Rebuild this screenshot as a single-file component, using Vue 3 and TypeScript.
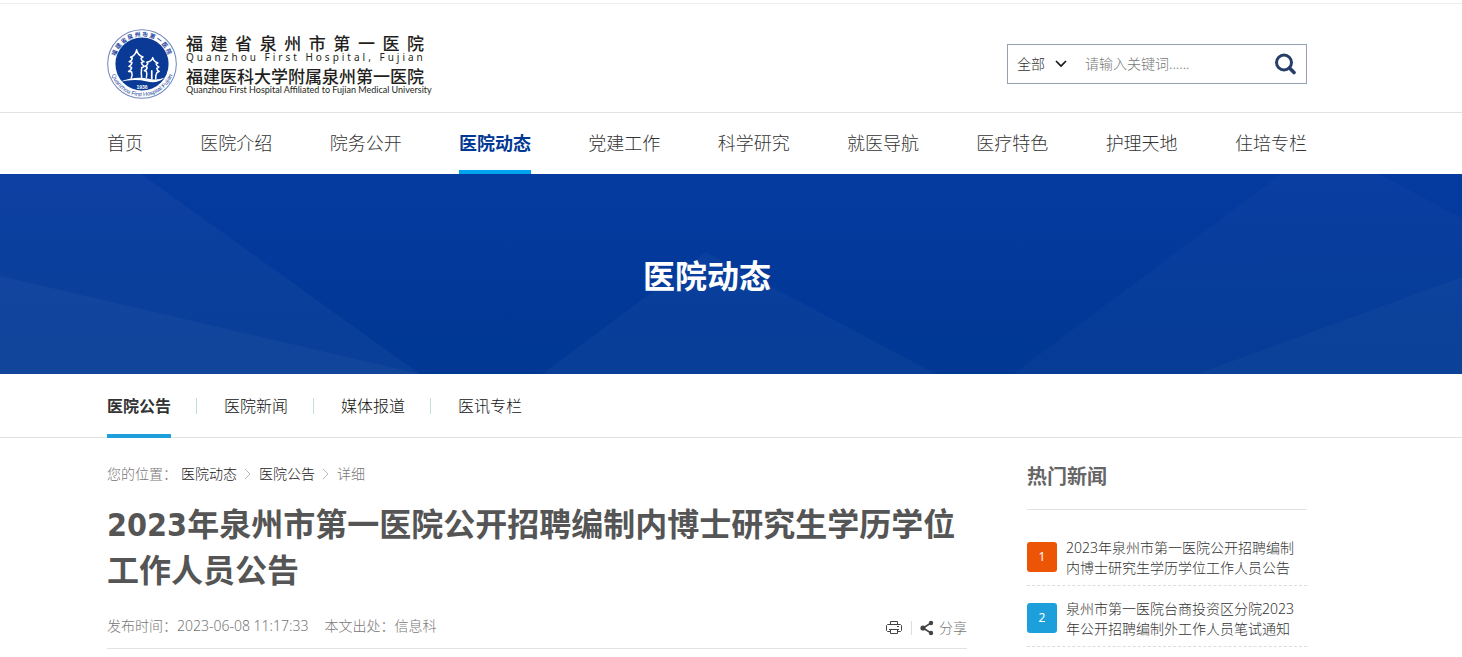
<script setup lang="ts">
import { ref } from 'vue'

interface HotNews {
  id: number
  title: string
}

const navItems: string[] = [
  '首页', '医院介绍', '院务公开', '医院动态', '党建工作',
  '科学研究', '就医导航', '医疗特色', '护理天地', '住培专栏',
]
const activeNav = ref('医院动态')

const subItems: string[] = ['医院公告', '医院新闻', '媒体报道', '医讯专栏']
const activeSub = ref('医院公告')

const hotNews: HotNews[] = [
  { id: 1, title: '2023年泉州市第一医院公开招聘编制内博士研究生学历学位工作人员公告' },
  { id: 2, title: '泉州市第一医院台商投资区分院2023年公开招聘编制外工作人员笔试通知' },
]

const scope = ref('全部')
const keyword = ref('')
</script>

<template>
  <div class="page">
    <header class="header">
      <div class="wrap header-row">
        <a class="logo" href="#">
          <svg class="seal" viewBox="20 20 208 208" aria-hidden="true">
            <defs>
              <path id="seal-top" d="M42 124 A82 82 0 0 1 206 124" />
              <path id="seal-bottom" d="M28 124 A96 96 0 0 0 220 124" />
            </defs>
            <circle cx="124" cy="124" r="102" fill="#fff" stroke="#6d85bf" stroke-width="3" />
            <circle cx="124" cy="124" r="79" fill="#0a3a95" />
            <text class="seal-cn" text-anchor="middle"><textPath href="#seal-top" startOffset="50%">福建省泉州市第一医院</textPath></text>
            <text class="seal-en" text-anchor="middle"><textPath href="#seal-bottom" startOffset="50%">Quanzhou First Hospital Fujian</textPath></text>
            <g fill="none" stroke="#fff" stroke-width="4.5" stroke-linecap="round" stroke-linejoin="round">
              <path d="M92 166 Q97 156 93 147 L84 146 Q93 142 93 134 L85 131 Q94 127 94 119 L86 117 Q95 113 95 106 L90 104 Q105 98 108 82 Q111 98 127 103 L121 107 Q122 114 130 117 L122 120 Q123 127 131 131 L123 135 Q121 150 123 164" />
              <path d="M137 164 Q140 154 137 146 L131 144 Q140 140 139 133 L133 131 Q142 126 141 121 L138 119 Q153 116 156 105 Q159 117 171 121 L166 124 Q167 130 174 133 L168 137 Q168 143 175 146 L168 150 Q164 158 165 168" />
              <path d="M153 167 V144" stroke-width="5" />
            </g>
            <path d="M58 177 Q105 158 144 168 Q169 174 192 164 Q169 184 139 176 Q101 167 58 177Z" fill="#fff" />
            <text class="seal-year" x="124" y="197" text-anchor="middle">1936</text>
          </svg>
          <span class="logo-text">
            <span class="logo-cn spread">福建省泉州市第一医院</span>
            <span class="logo-en tracked">Quanzhou First Hospital, Fujian</span>
            <span class="logo-cn">福建医科大学附属泉州第一医院</span>
            <span class="logo-en">Quanzhou First Hospital Affiliated to Fujian Medical University</span>
          </span>
        </a>

        <form class="search" role="search" @submit.prevent>
          <label class="scope">
            <select v-model="scope" aria-label="搜索范围">
              <option>全部</option>
            </select>
            <svg width="12" height="8" viewBox="0 0 12 8" aria-hidden="true">
              <path d="M1 1 L6 6 L11 1" fill="none" stroke="#111" stroke-width="1.6" />
            </svg>
          </label>
          <input v-model="keyword" type="text" placeholder="请输入关键词......" aria-label="关键词" />
          <button type="submit" aria-label="搜索">
            <svg width="22" height="22" viewBox="0 0 22 22" aria-hidden="true">
              <circle cx="10" cy="9.5" r="7.5" fill="none" stroke="#263f69" stroke-width="3" />
              <path d="M15.500 15 L20 19.500" stroke="#263f69" stroke-width="3.6" stroke-linecap="round" />
            </svg>
          </button>
        </form>
      </div>
    </header>

    <nav class="nav" aria-label="主导航">
      <div class="wrap nav-row">
        <a
          v-for="item in navItems"
          :key="item"
          href="#"
          :class="{ active: item === activeNav }"
          @click.prevent="activeNav = item"
        >{{ item }}</a>
      </div>
    </nav>

    <section class="banner">
      <svg class="banner-art" viewBox="0 0 1462 200" preserveAspectRatio="none" aria-hidden="true">
        <g fill="#fff">
          <polygon points="0,0 141,0 420,200 0,200" opacity="0.035" />
          <polygon points="0,102 420,200 0,200" opacity="0.035" />
          <polygon points="542,200 706,78 936,200" opacity="0.032" />
          <polygon points="1013,200 1281,0 1379,0 1462,44 1462,200" opacity="0.022" />
          <polygon points="1197,200 1462,103 1462,200" opacity="0.028" />
        </g>
      </svg>
      <h2>医院动态</h2>
    </section>

    <nav class="subnav" aria-label="栏目">
      <ul class="wrap">
        <li v-for="item in subItems" :key="item">
          <a href="#" :class="{ active: item === activeSub }" @click.prevent="activeSub = item">{{ item }}</a>
        </li>
      </ul>
    </nav>

    <div class="wrap content">
      <main class="article">
        <div class="crumbs">
          <span class="crumb-label">您的位置：</span>
          <a href="#">医院动态</a>
          <svg width="22" height="12" viewBox="0 0 22 12" aria-hidden="true"><path d="M8 1 L13 6 L8 11" fill="none" stroke="#bbb" /></svg>
          <a href="#">医院公告</a>
          <svg width="22" height="12" viewBox="0 0 22 12" aria-hidden="true"><path d="M8 1 L13 6 L8 11" fill="none" stroke="#bbb" /></svg>
          <span>详细</span>
        </div>
        <h1>2023年泉州市第一医院公开招聘编制内博士研究生学历学位工作人员公告</h1>
        <div class="meta">
          <span>发布时间：2023-06-08 11:17:33</span>
          <span>本文出处：信息科</span>
          <div class="tools">
            <button type="button" class="print" aria-label="打印">
              <svg width="16" height="14" viewBox="0 0 16 14" aria-hidden="true">
                <g fill="none" stroke="#444">
                  <path d="M4.5 3.5 V0.5 H11.5 V3.5" />
                  <path d="M4 10.5 H1.500 L0.500 9.500 V4.500 L1.500 3.500 H14.500 L15.500 4.500 V9.500 L14.500 10.500 H12" />
                  <path d="M4.500 8.500 H11.500 V12.500 H4.500 Z M3 8.500 H13 M11 5.500 H13" />
                </g>
              </svg>
            </button>
            <button type="button" class="share">
              <svg width="14" height="16" viewBox="0 0 14 16" aria-hidden="true">
                <path d="M11 3 L3 8 L11 13" fill="none" stroke="#444" stroke-width="1.5" />
                <g fill="#444"><circle cx="11" cy="3" r="2.200" /><circle cx="3" cy="8" r="2.600" /><circle cx="11" cy="13" r="2.200" /></g>
              </svg>
              <span>分享</span>
            </button>
          </div>
        </div>
      </main>

      <aside class="hot">
        <h3>热门新闻</h3>
        <ol>
          <li v-for="news in hotNews" :key="news.id">
            <span class="badge" :class="{ first: news.id === 1 }">{{ news.id }}</span>
            <a href="#">{{ news.title }}</a>
          </li>
        </ol>
      </aside>
    </div>
  </div>
</template>

<style>
body {
  margin: 0;
  background: #fff;
}
</style>

<style scoped>
.page {
  font-family: "Noto Sans", "Noto Sans CJK SC", sans-serif;
  font-size: 14px;
  font-weight: 300;
  line-height: 20px;
  color: #333;
  border-top: 1px solid #fff;
}
.page *, .page {
  box-sizing: border-box;
}
a {
  color: inherit;
  text-decoration: none;
}
h1, h2, h3, ul, ol {
  margin: 0;
  padding: 0;
}
ul, ol {
  list-style: none;
}
button, input, select {
  font: inherit;
  color: inherit;
  border: 0;
  padding: 0;
  margin: 0;
  background: none;
}
button {
  cursor: pointer;
}
.header, .nav, .banner, .subnav, .content {
  padding-right: 48px;
}
.wrap {
  max-width: 1200px;
  margin: 0 auto;
}

.header {
  margin-top: 2px;
  border-top: 1px solid #eee;
  border-bottom: 1px solid #e2e2e2;
}
.header-row {
  display: flex;
  justify-content: space-between;
  align-items: center;
  height: 108px;
  padding-top: 12px;
}
.logo {
  display: flex;
  align-items: center;
  gap: 9px;
}
.seal {
  width: 70px;
  height: 70px;
}
.seal-cn {
  font-family: "Noto Sans CJK SC", sans-serif;
  font-size: 17px;
  font-weight: 700;
  fill: #17409a;
  letter-spacing: 4px;
}
.seal-en {
  font-family: "Liberation Sans", sans-serif;
  font-size: 17px;
  fill: #17409a;
}
.seal-year {
  font-family: "Liberation Sans", sans-serif;
  font-size: 15px;
  font-weight: 700;
  fill: #fff;
}
.logo-text {
  display: flex;
  flex-direction: column;
  width: 238px;
  color: #231f20;
  white-space: nowrap;
}
.logo-cn {
  font-family: "Noto Sans CJK SC", sans-serif;
  font-size: 17px;
  line-height: 18px;
  font-weight: 500;
}
.spread {
  text-align: justify;
  text-align-last: justify;
}
.logo-en {
  font-family: Lato, sans-serif;
  font-size: 9px;
  line-height: 10px;
  font-weight: 400;
}
.tracked {
  margin-bottom: 5px;
  font-family: "Noto Sans", sans-serif;
  font-size: 10px;
  letter-spacing: 3px;
}

.search {
  display: flex;
  align-items: center;
  width: 300px;
  height: 40px;
  padding: 0 10px 0 9px;
  border: 1px solid #95a0b5;
}
.scope {
  display: flex;
  align-items: center;
}
.scope select {
  appearance: none;
  width: 38px;
  outline: 0;
}
.search input {
  flex: 1;
  min-width: 0;
  margin-left: 18px;
  outline: 0;
}
.search input::placeholder {
  color: #777;
  opacity: 1;
}
.search button, .search button svg {
  display: block;
}

.nav-row {
  display: flex;
  justify-content: space-between;
  font-size: 18px;
}
.nav-row a {
  height: 61px;
  line-height: 61px;
  border-bottom: 4px solid transparent;
}
.nav-row .active {
  color: #003894;
  font-weight: 700;
  border-bottom-color: #00a3ee;
}

.banner {
  position: relative;
  height: 200px;
  background: linear-gradient(#053a9f, #003894);
}
.banner-art {
  position: absolute;
  inset: 0;
  width: 100%;
  height: 100%;
}
.banner h2 {
  position: relative;
  font-size: 32px;
  line-height: 204px;
  text-align: center;
  color: #fff;
}

.subnav {
  border-bottom: 1px solid #e2e2e2;
}
.subnav ul {
  display: flex;
  height: 63px;
  font-size: 16px;
  color: #111;
}
.subnav li {
  display: flex;
  align-items: center;
}
.subnav li + li::before {
  content: "";
  width: 1px;
  height: 16px;
  margin: 0 27px 0 25px;
  background: #bfe3d8;
}
.subnav a {
  height: 64px;
  margin-bottom: -1px;
  line-height: 64px;
  border-bottom: 4px solid transparent;
}
.subnav .active {
  color: #333;
  font-weight: 700;
  border-bottom-color: #1c9fdb;
}

.content {
  display: flex;
  gap: 60px;
  max-width: 1248px;
}
.article {
  flex: 1;
  min-width: 0;
  padding-top: 26px;
}
.crumbs {
  display: flex;
  align-items: center;
  color: #777;
}
.crumbs a {
  color: #222;
}
.crumb-label {
  margin-right: 4px;
}
h1 {
  margin-top: 18px;
  font-family: "DejaVu Sans Condensed", "Noto Sans CJK SC", sans-serif;
  font-size: 32px;
  line-height: 46px;
  color: #555;
}
.meta {
  display: flex;
  align-items: center;
  gap: 16px;
  height: 55px;
  padding-top: 9px;
  border-bottom: 1px solid #e2e2e2;
  color: #777;
}
.tools {
  display: flex;
  align-items: center;
  margin-left: auto;
  padding-top: 4px;
}
.tools svg {
  display: block;
}
.print {
  padding-right: 9px;
  border-right: 1px solid #ddd;
}
.share {
  display: flex;
  align-items: center;
  gap: 5px;
  padding-left: 8px;
}

.hot {
  width: 280px;
  padding-top: 18px;
}
.hot h3 {
  height: 54px;
  line-height: 42px;
  font-size: 20px;
  color: #666;
  border-bottom: 1px solid #e2e2e2;
}
.hot ol {
  padding-top: 15px;
}
.hot li {
  display: flex;
  gap: 9px;
  padding: 13px 0 7px;
  border-bottom: 1px dashed #ddd;
}
.hot li a {
  flex: 1;
}
.badge {
  width: 30px;
  height: 30px;
  margin-top: 4px;
  border-radius: 3px;
  background: #1c9fdb;
  color: #fff;
  font-size: 12px;
  font-weight: 400;
  line-height: 30px;
  text-align: center;
}
.badge.first {
  background: #eb5505;
}
</style>
